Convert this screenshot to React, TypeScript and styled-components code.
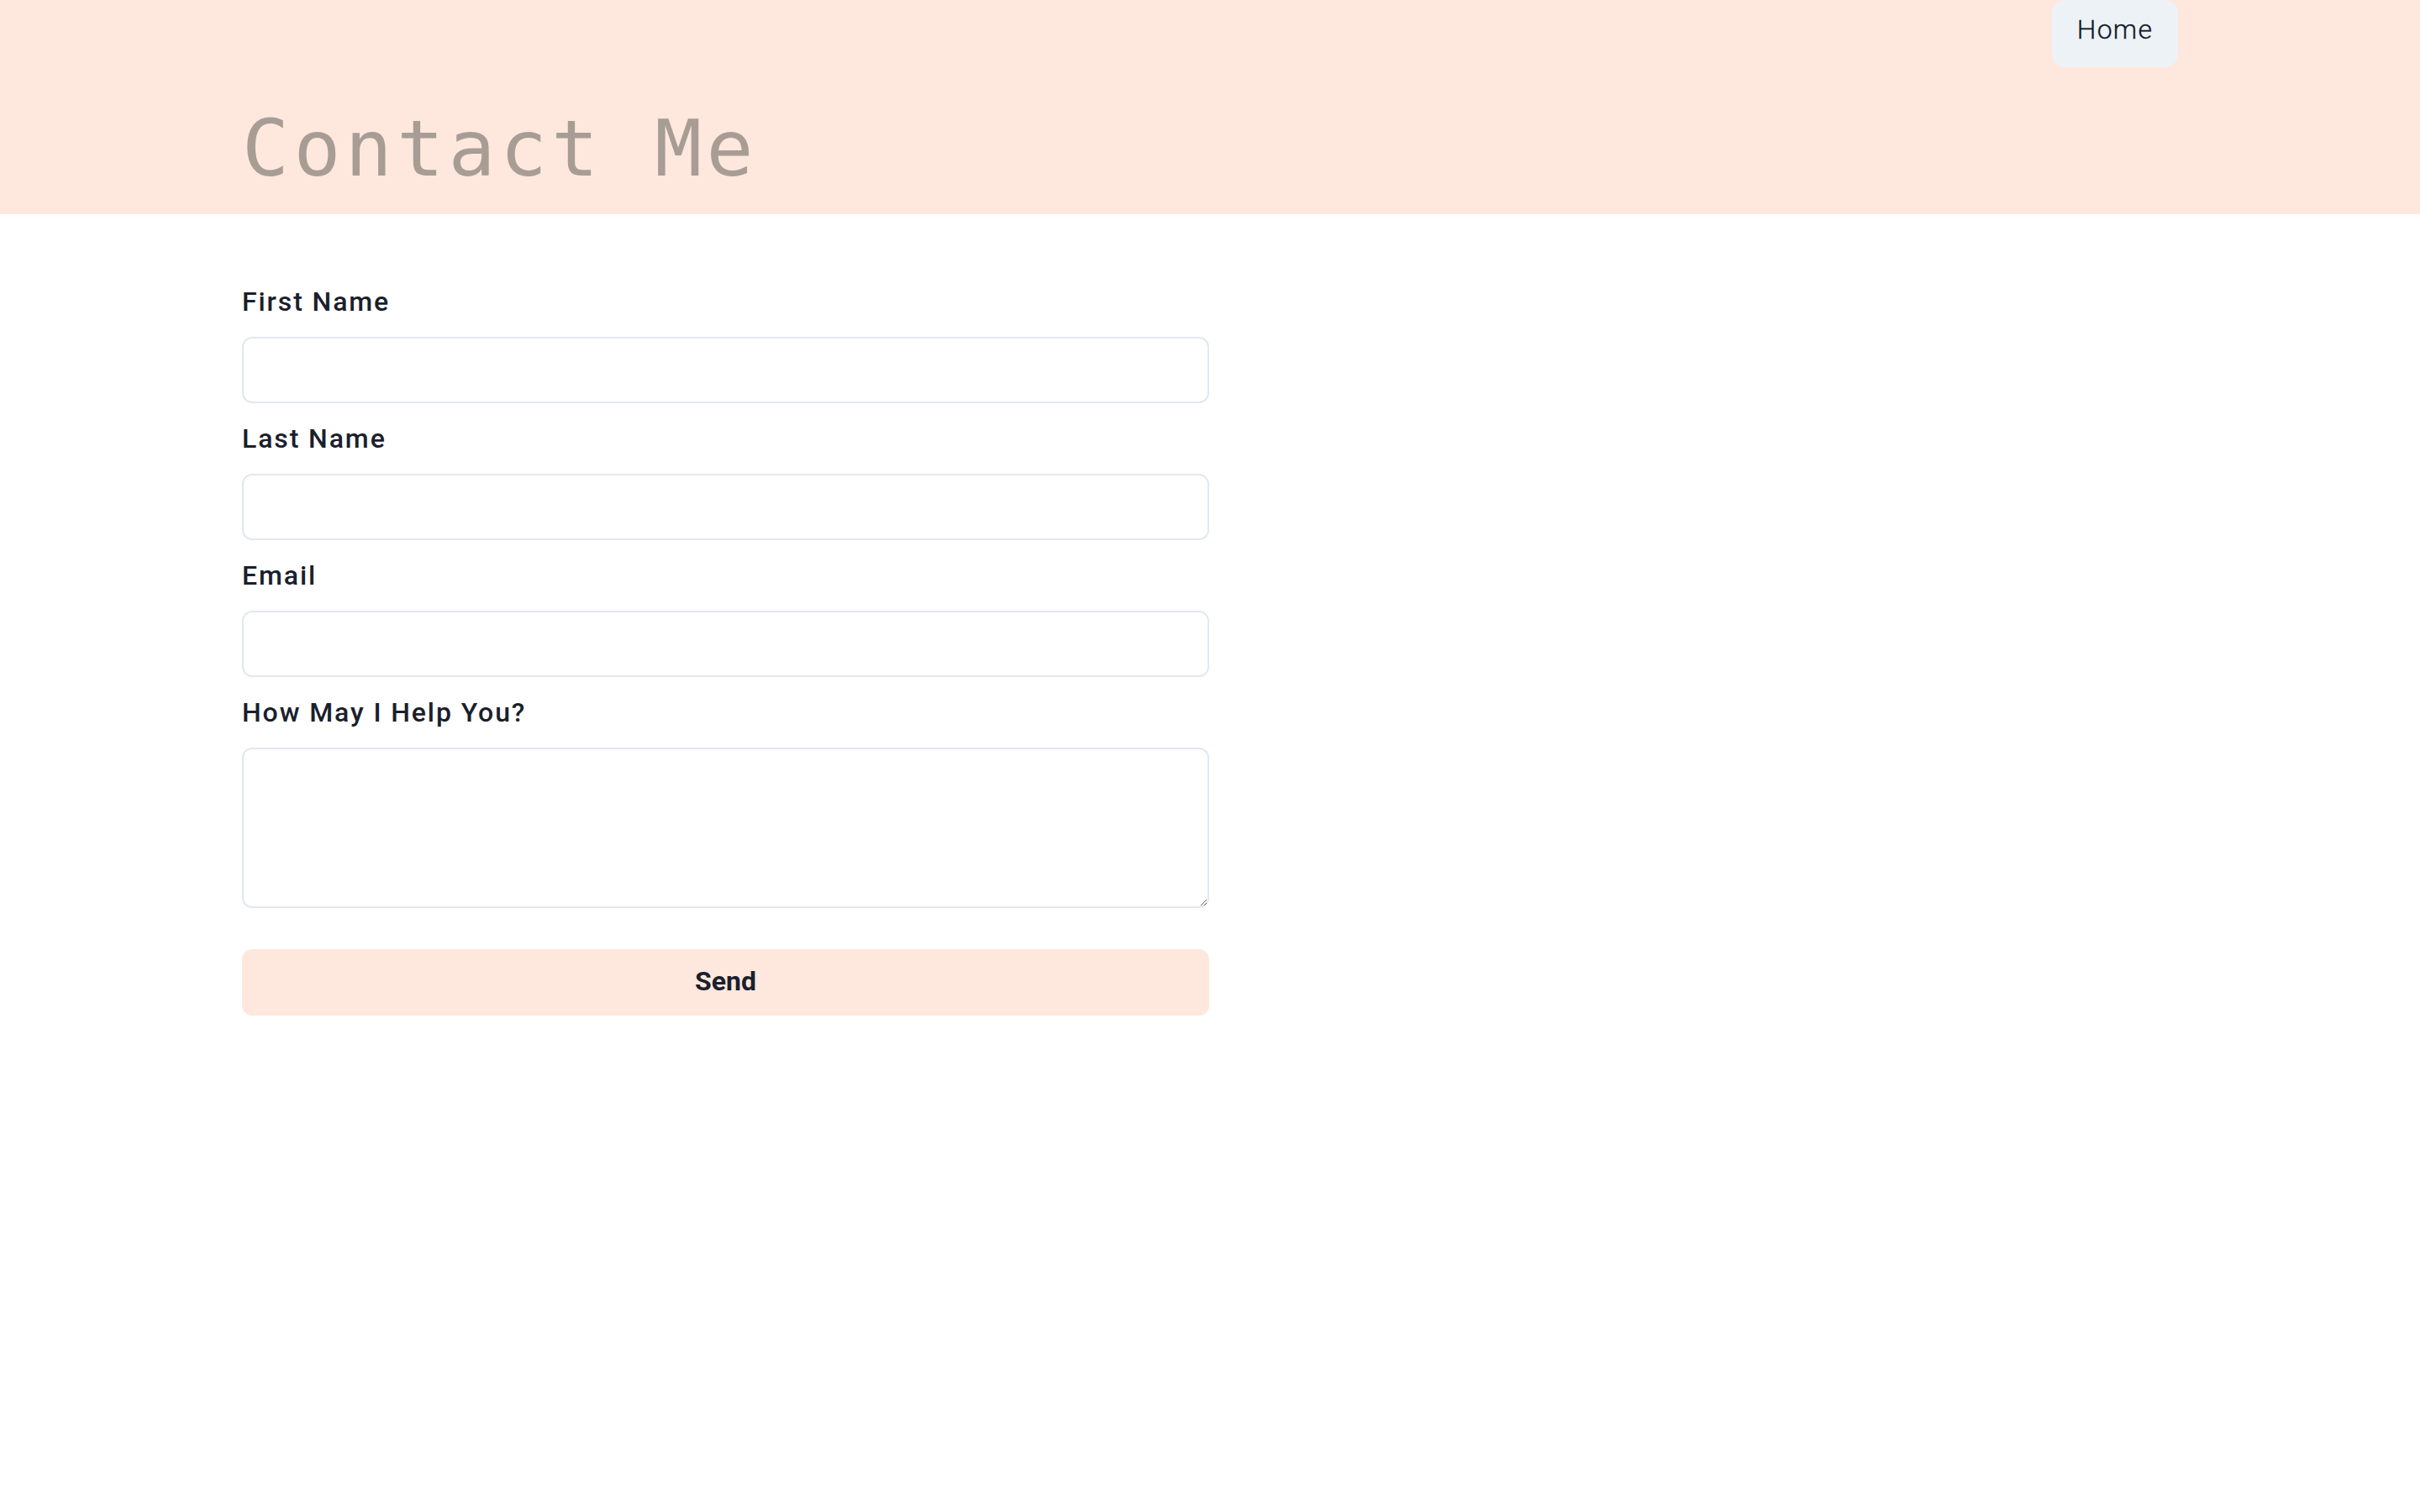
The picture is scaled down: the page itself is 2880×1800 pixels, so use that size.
import React from "react";
import styled, { createGlobalStyle } from "styled-components";

const GlobalStyle = createGlobalStyle`
  html, body {
    margin: 0;
    padding: 0;
    background: #ffffff;
  }
  body {
    font-family: Roboto, "Liberation Sans", sans-serif;
    color: #1a202c;
  }
  * { box-sizing: border-box; }
`;

const Header = styled.header`
  background: #fee8dd;
  padding: 0 288px 30px;
  display: flex;
  flex-direction: column;
`;

const Nav = styled.nav`
  display: flex;
  justify-content: flex-end;
`;

const NavButton = styled.a`
  display: flex;
  align-items: center;
  justify-content: center;
  height: 80px;
  width: 150px;
  padding: 0 0 11px;
  background: #edf2f7;
  border-radius: 16px;
  font-family: Roboto, sans-serif;
  font-size: 32px;
  font-weight: 300;
  color: #111827;
  text-decoration: none;
  letter-spacing: 1.2px;
  -webkit-text-stroke: 0.3px #111827;
`;

const Title = styled.h1`
  margin: 49px 0 0;
  font-family: "DejaVu Sans Mono", monospace;
  font-weight: 400;
  font-size: 93px;
  line-height: 96px;
  letter-spacing: 5.4px;
  color: #a89d95;
`;

const Main = styled.main`
  padding: 80px 288px 0;
`;

const Form = styled.form`
  width: 1151px;
  display: flex;
  flex-direction: column;
`;

const Field = styled.div`
  display: flex;
  flex-direction: column;
  margin-bottom: 18px;
`;

const Label = styled.label`
  font-family: Roboto, sans-serif;
  font-weight: 500;
  font-size: 32px;
  line-height: 48px;
  letter-spacing: 1.9px;
  color: #1a202c;
  margin-bottom: 18px;
`;

const Input = styled.input`
  height: 79px;
  width: 100%;
  border: 2px solid #e2e8f0;
  border-radius: 12px;
  background: #fff;
  padding: 0 24px;
  font-size: 32px;
  font-family: Roboto, sans-serif;
  outline: none;
`;

const TextArea = styled.textarea`
  height: 191px;
  width: 100%;
  border: 2px solid #e2e8f0;
  border-radius: 12px;
  background: #fff;
  padding: 16px 24px;
  font-size: 32px;
  font-family: Roboto, sans-serif;
  outline: none;
  resize: vertical;
  display: block;
`;

const SendButton = styled.button`
  margin-top: 31px;
  height: 79px;
  width: 100%;
  border: none;
  border-radius: 12px;
  background: #fee8dd;
  font-family: Roboto, sans-serif;
  font-weight: 700;
  font-size: 32px;
  color: #1a202c;
  cursor: pointer;
  padding: 0 0 4px;
`;

export default function App() {
  return (
    <>
      <GlobalStyle />
      <Header>
        <Nav>
          <NavButton href="#">Home</NavButton>
        </Nav>
        <Title>Contact Me</Title>
      </Header>
      <Main>
        <Form onSubmit={(e) => e.preventDefault()}>
          <Field>
            <Label htmlFor="first">First Name</Label>
            <Input id="first" type="text" />
          </Field>
          <Field>
            <Label htmlFor="last">Last Name</Label>
            <Input id="last" type="text" />
          </Field>
          <Field>
            <Label htmlFor="email">Email</Label>
            <Input id="email" type="email" />
          </Field>
          <Field>
            <Label htmlFor="help">How May I Help You?</Label>
            <TextArea id="help" />
          </Field>
          <SendButton type="submit">Send</SendButton>
        </Form>
      </Main>
    </>
  );
}
